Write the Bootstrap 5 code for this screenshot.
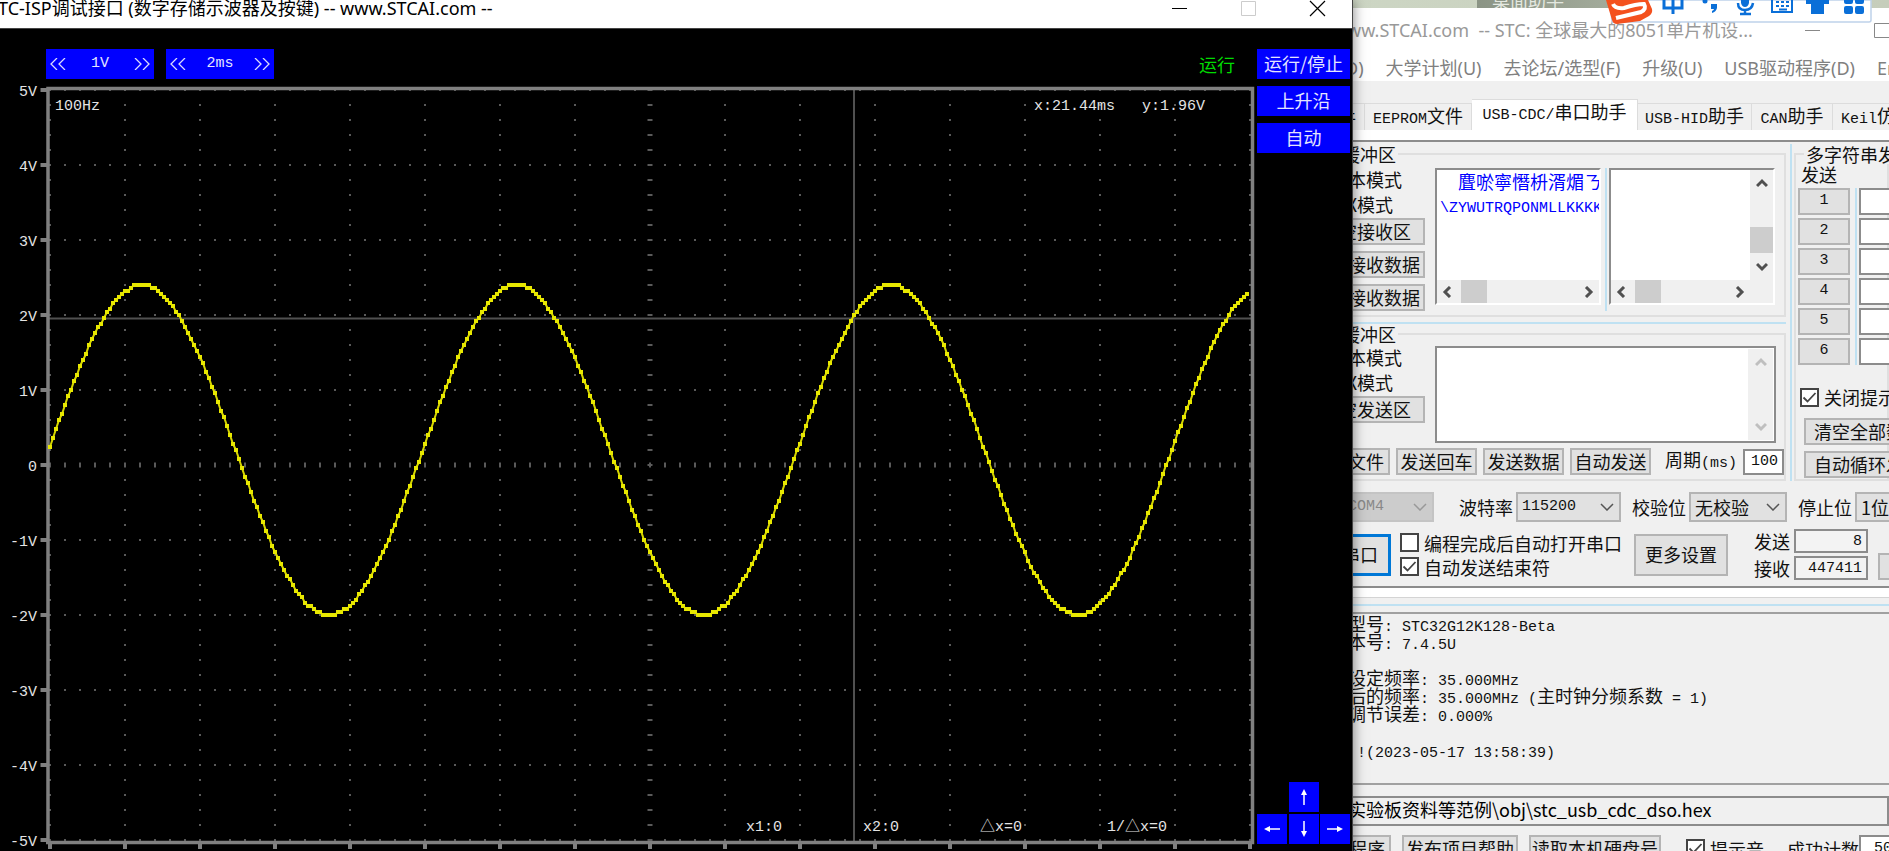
<!DOCTYPE html>
<html lang="zh-CN">
<head>
<meta charset="utf-8">
<meta name="viewport" content="width=device-width, initial-scale=1">
<title>STC-ISP 数字存储示波器</title>
<link href="https://cdn.jsdelivr.net/npm/bootstrap@5.3.0/dist/css/bootstrap.min.css" rel="stylesheet">
<style>
  body { font-family: "Noto Sans CJK SC", sans-serif; font-size: 18px; line-height: 20px; color: #111; background: #f0f0f0; }
  .en { font-family: "Liberation Mono", "Noto Sans CJK SC", monospace; font-size: 15px; }
  .ui { font-family: "Noto Sans", "Noto Sans CJK SC", sans-serif; }
  .desk { height: 100vh; }

  /* oscilloscope window */
  .scope { z-index: 2; min-width: 0; background: #000; box-shadow: 0 0 12px rgba(0,0,0,.5); border-right: 1px solid #444; }
  .scope-title { height: 29px; background: #fff; color: #000; border-bottom: 1px solid #444; line-height: 16px; }
  .scope-title .caption { text-indent: -2px; }
  .winctl { width: 69px; height: 17px; border: 0; background: none; padding: 0; display: flex; justify-content: center; }
  .scope-body { padding: 20px 2px 0 0; }
  .key { background: #00f; color: #e4e4ff; border: 0; border-radius: 0; height: 30px; padding: 0 0 2px; font-size: 18px; line-height: 28px; }
  .key svg { display: block; margin: 2px auto 0; }
  .knobs { padding-left: 46px; gap: 12px; }
  .knob { width: 108px; height: 30px; background: #00f; color: #e4e4ff; }
  .knob button { background: none; border: 0; color: inherit; padding: 0 4px; height: 30px; }
  .knob svg { display: block; }
  .side { width: 93px; padding-bottom: 7px; }
  .arrows { display: grid; grid-template-columns: repeat(3, 30px); justify-content: space-between; row-gap: 2px; }
  .arrows .up { grid-column: 2; }
  .arrows .left { grid-column: 1; }
  .state { color: #00dc00; width: 58px; line-height: 30px; }
  .plot { display: block; width: 100%; height: auto; }
  .plot text { font-family: "Liberation Mono", "Noto Sans CJK SC", monospace; font-size: 15px; fill: #e4e4e4; }

  /* programmer window, partly behind the scope */
  .isp { flex: 0 0 569px; margin-left: -33px; background: #f0f0f0; overflow: hidden; }
  .wall { height: 8px; background: linear-gradient(90deg, #cdd6c4, #c6cdbb); }
  .gadget { left: 157px; top: 0; width: 134px; height: 8px; background: linear-gradient(90deg, #8b9485, #a3ab9b); color: #e4e8e0; overflow: hidden; padding-left: 15px; line-height: 0; }
  .ime { right: 17px; top: 0; width: 266px; height: 24px; }
  .isp-title { height: 46px; background: #fff; color: #999; padding: 0 0 2px 27px; }
  .isp-menu { height: 27px; background: #fff; padding-left: 25px; gap: 22px; }
  .isp-menu a { color: #808080; text-decoration: none; white-space: nowrap; }
  .tabrow { height: 49px; flex-wrap: nowrap; overflow: hidden; }
  .tabrow button { flex: none; height: 27px; border: 1px solid #dcdcdc; border-bottom: 0; border-left: 0; background: #f0f0f0; padding: 0; color: #111; white-space: nowrap; }
  .tabrow button.on { height: 31px; background: #fff; padding-bottom: 3px; }
  .tabfoot { height: 12px; background: #fff; border-bottom: 2px solid #8c8c8c; }
  .w45 { width: 45px; } .w81 { width: 81px; } .w107 { width: 107px; } .w114 { width: 114px; } .w166 { width: 166px; }

  fieldset { border: 2px solid #dfdfdf; min-width: 0; }
  fieldset legend { float: none; width: auto; font-size: 18px; line-height: 20px; margin: 0 0 0 20px; padding: 0 2px; white-space: nowrap; }
  .left-col { width: 466px; flex: none; }
  .left-col fieldset { border-left: 0; }
  .rule-h { height: 2px; background: #bfe1f2; }
  .rule-v { width: 2px; background: #bfe1f2; flex: none; }
  .split { margin: 0 2px 0 4px; }
  .bt { background: #e1e1e1; border: 2px solid #b4b4b4; border-radius: 0; height: 27px; padding: 0 0 2px; font-size: 18px; line-height: 20px; color: #111; white-space: nowrap; flex: none; }
  .bt.en { font-size: 15px; }
  .modes { width: 105px; flex: none; }
  .modes span { height: 25px; line-height: 22px; padding-right: 23px; text-align: right; }
  .modes span + span { padding-right: 32px; }
  .modes .bt { text-align: right; padding-right: 3px; margin-bottom: 6px; }
  .modes .bt:last-child { margin-bottom: 0; }
  .modes .bt.short { padding-right: 12px; }
  .pane { width: 166px; height: 137px; background: #fff; border: 2px solid #fff; border-top-color: #8c8c8c; border-left-color: #8c8c8c; flex: none; display: grid; grid-template: 1fr 23px / 1fr 23px; }
  .pane textarea { border: 0; resize: none; outline: 0; min-width: 0; min-height: 0; }
  .pane.wide { grid-template: 1fr 23px / 1fr; }
  .rx { padding-left: 3px; overflow: hidden; color: #00f; line-height: 23px; white-space: pre; outline: 0; min-width: 0; }
  .bar { background: #f0f0f0; display: flex; align-items: center; justify-content: space-between; padding: 0 5px; }
  .bar.v { flex-direction: column; padding: 8px 0; }
  .bar i { background: #cdcdcd; }
  .bar.h i { width: 26px; height: 23px; margin-right: auto; margin-left: 9px; }
  .bar.v i { width: 23px; height: 26px; margin-top: auto; margin-bottom: 9px; }
  .bar svg { flex: none; }
  .send { width: 341px; height: 97px; border: 2px solid #8c8c8c; background: #fff; }
  .send textarea { border: 0; resize: none; outline: 0; flex: 1; min-width: 0; }
  .send .bar { width: 25px; margin: 1px; }
  .box { border: 2px solid #8c8c8c; background: #fff; border-radius: 0; padding: 0 4px; color: #111; min-width: 0; }
  .multi { display: grid; grid-template-columns: 52px 2px 60px; column-gap: 5px; row-gap: 3px; padding-left: 2px; }
  .multi .rule-v { grid-column: 2; grid-row: 1 / 7; }
  .multi .bt { grid-column: 1; } .multi .box { grid-column: 3; height: 27px; margin-left: -3px; }
  input[type=checkbox] { appearance: none; width: 19px; height: 19px; border: 2px solid #444; background: #fff; margin: 0; flex: none; }
  input[type=checkbox]:checked { background: #fff url("data:image/svg+xml,%3Csvg xmlns='http://www.w3.org/2000/svg' viewBox='0 0 15 15'%3E%3Cpath d='M1.500 7.500 5.500 11.500 13.500 3' fill='none' stroke='%23444' stroke-width='1.800'/%3E%3C/svg%3E"); }
  .tick { display: flex; align-items: center; gap: 5px; height: 20px; white-space: nowrap; }
  .combo { height: 30px; border: 2px solid #b4b4b4; border-radius: 0; padding: 0 4px; appearance: none; color: #111; flex: none; background: #e1e1e1 url("data:image/svg+xml,%3Csvg xmlns='http://www.w3.org/2000/svg' viewBox='0 0 14 8'%3E%3Cpath d='M1 1 7 7 13 1' fill='none' stroke='%23555' stroke-width='1.500'/%3E%3C/svg%3E") no-repeat right 5px center / 14px 8px; }
  .combo:disabled { background-color: #ccc; background-image: url("data:image/svg+xml,%3Csvg xmlns='http://www.w3.org/2000/svg' viewBox='0 0 14 8'%3E%3Cpath d='M1 1 7 7 13 1' fill='none' stroke='%23999' stroke-width='1.500'/%3E%3C/svg%3E"); border-color: #c4c4c4; color: #888; opacity: 1; }
  .port { height: 42px; width: 71px; border-color: #0078d7; border-width: 3px; padding-right: 10px; text-align: right; }
  .count { width: 74px; height: 24px; text-align: right; background: #f3f3f3; }
  .band { height: 12px; background: #fff; border-top: 2px solid #8c8c8c; border-bottom: 1px solid #d4d4d4; }
  .log { height: 173px; border: 2px solid #a0a0a0; border-width: 2px 0; padding: 0 0 0 28px; line-height: 18px; white-space: pre; }
  .log div { height: 18px; }
  .path { height: 30px; width: 100%; border: 2px solid #8c8c8c; background: #f0f0f0; padding: 0 0 4px 26px; }
</style>
</head>
<body>
<div class="desk d-flex overflow-hidden">

  <main class="scope flex-grow-1 position-relative d-flex flex-column">
    <header class="scope-title ui d-flex justify-content-between">
      <div class="caption text-nowrap">TC-ISP调试接口 (数字存储示波器及按键) -- www.STCAI.com --</div>
      <div class="d-flex">
        <button class="winctl" aria-label="最小化"><svg width="17" height="17"><path d="M1 8.500h15" stroke="#000"/></svg></button>
        <button class="winctl" aria-label="最大化"><svg width="17" height="17"><path d="M1.500 1.500h14v14h-14z" fill="none" stroke="#ccc"/></svg></button>
        <button class="winctl" aria-label="关闭"><svg width="17" height="17"><path d="M1 1l15 15M16 1L1 16" stroke="#000" stroke-width="1.200"/></svg></button>
      </div>
    </header>

    <div class="scope-body d-flex flex-grow-1">
      <div class="flex-grow-1">
        <div class="knobs d-flex">
          <div class="knob d-flex justify-content-between align-items-center">
            <button aria-label="减小电压"><svg width="16" height="12"><path d="M7 0 1 6l6 6M15 0 9 6l6 6" fill="none" stroke="#dcdcff" stroke-width="1.300"/></svg></button>
            <span class="en">1V</span>
            <button aria-label="增大电压"><svg width="16" height="12"><path d="M1 0l6 6-6 6M9 0l6 6-6 6" fill="none" stroke="#dcdcff" stroke-width="1.300"/></svg></button>
          </div>
          <div class="knob d-flex justify-content-between align-items-center">
            <button aria-label="减小时基"><svg width="16" height="12"><path d="M7 0 1 6l6 6M15 0 9 6l6 6" fill="none" stroke="#dcdcff" stroke-width="1.300"/></svg></button>
            <span class="en">2ms</span>
            <button aria-label="增大时基"><svg width="16" height="12"><path d="M1 0l6 6-6 6M9 0l6 6-6 6" fill="none" stroke="#dcdcff" stroke-width="1.300"/></svg></button>
          </div>
          <div class="state ms-auto">运行</div>
        </div>
        <svg class="plot" viewBox="0 79 1257 772" role="img" aria-label="100Hz 正弦波形">
          <g id="grid" fill="#5a5a5a"></g>
          <path d="M49 318.500H1251M854 90V841" stroke="#505050" stroke-width="2" fill="none"/>
          <path d="M48 842.500V88.500H1252.500V842.500H46" fill="none" stroke="#808080" stroke-width="3.500"/>
          <g id="ticks" fill="#808080"></g>
          <path id="link" fill="none" stroke="#d8d800" stroke-width="2"/>
          <g id="dots" fill="#e8e800"></g>
          <g id="volts" text-anchor="end"></g>
          <text x="55" y="110">100Hz</text>
          <text x="1034" y="110">x:21.44ms</text>
          <text x="1142" y="110">y:1.96V</text>
          <text x="746" y="831">x1:0</text>
          <text x="863" y="831">x2:0</text>
          <text x="980" y="831">△x=0</text>
          <text x="1107" y="831">1/△x=0</text>
        </svg>
      </div>
      <aside class="side flex-shrink-0 d-flex flex-column justify-content-between">
        <div class="d-grid" style="gap:7px">
          <button class="key">运行/停止</button>
          <button class="key">上升沿</button>
          <button class="key">自动</button>
        </div>
        <div class="arrows">
          <button class="key up" aria-label="上"><svg width="18" height="18"><path d="M9 17V3" stroke="#fff" stroke-width="1.500"/><path d="M9 1 6 7h6z" fill="#fff"/></svg></button>
          <button class="key left" aria-label="左"><svg width="18" height="18"><path d="M17 9H3" stroke="#fff" stroke-width="1.500"/><path d="M1 9 7 6v6z" fill="#fff"/></svg></button>
          <button class="key" aria-label="下"><svg width="18" height="18"><path d="M9 1v14" stroke="#fff" stroke-width="1.500"/><path d="M9 17 6 11h6z" fill="#fff"/></svg></button>
          <button class="key" aria-label="右"><svg width="18" height="18"><path d="M1 9h14" stroke="#fff" stroke-width="1.500"/><path d="M17 9 11 6v6z" fill="#fff"/></svg></button>
        </div>
      </aside>
    </div>
  </main>

  <section class="isp position-relative">
    <div class="wall"></div>
    <div class="gadget position-absolute">桌面助手</div>
    <svg class="ime position-absolute" viewBox="1606 0 266 24">
      <path d="M1610 0H1871V20q0 2-2 2H1612z" fill="#fff" stroke="#bfd2ea" stroke-width="1.500"/>
      <path d="M1606 0H1648l4 9q1 4-3 7l-9 5-23 3q-4 0-5-4z" fill="#f4511e"/>
      <path d="M1613 4q2 5 11 4 12-4 20-4 3 5-3 8l-25 6" fill="none" stroke="#fff" stroke-width="4"/>
      <g fill="none" stroke="#0a6fd8" stroke-width="3">
        <path d="M1664 0v8h18V0M1673 0v14"/>
        <path d="M1738 3q0 7 7 7t8-7M1745 10v5M1740 14h11" stroke-width="2.500"/>
        <path d="M1772 0v12h20V0M1776 2h3m2 0h3m2 0h3M1776 6h3m2 0h3m2 0h3M1779 9.500h8" stroke-width="2"/>
      </g>
      <g fill="#0a6fd8">
        <circle cx="1705" cy="1" r="2.500"/><path d="M1711 4h6v4q-1 4-5 5v-2q2-1 2-2h-3z"/>
        <path d="M1741 0h8v3q-1 4-4 4t-4-4z"/>
        <path d="M1806 0h23v4h-5v10h-13V4h-5z"/>
        <rect x="1844" y="-4" width="9" height="8" rx="2"/><rect x="1855" y="-4" width="9" height="8" rx="2"/>
        <rect x="1844" y="6" width="9" height="8" rx="2"/><rect x="1855" y="6" width="9" height="8" rx="2"/>
      </g>
    </svg>

    <div class="isp-title ui d-flex align-items-center text-nowrap">
      <span class="flex-grow-1">ww.STCAI.com&nbsp; -- STC: 全球最大的8051单片机设...</span>
      <svg width="85" height="17"><path d="M1 8.500h15M70.500 1.500h15v14h-15z" fill="none" stroke="#888"/></svg>
    </div>
    <nav class="isp-menu ui d-flex align-items-center">
      <a href="#">D)</a><a href="#">大学计划(U)</a><a href="#">去论坛/选型(F)</a><a href="#">升级(U)</a><a href="#">USB驱动程序(D)</a><a href="#">English</a>
    </nav>
    <div class="tabrow d-flex align-items-end">
      <button class="w45 text-end pe-2">件</button>
      <button class="w107"><span class="en">EEPROM</span>文件</button>
      <button class="w166 on"><span class="en">USB-CDC/</span>串口助手</button>
      <button class="w114"><span class="en">USB-HID</span>助手</button>
      <button class="w81"><span class="en">CAN</span>助手</button>
      <button class="w107 text-start ps-2"><span class="en">Keil</span>仿真</button>
    </div>
    <div class="tabfoot"></div>

    <div class="d-flex" style="padding-top:2px">
      <div class="left-col">
        <fieldset>
          <legend>缓冲区</legend>
          <div class="d-flex pt-1 pb-1">
            <div class="modes d-grid align-content-start">
              <span>本模式</span><span>X模式</span>
              <button class="bt short">空接收区</button>
              <button class="bt">接收数据</button>
              <button class="bt">接收数据</button>
            </div>
            <div class="pane wide" style="margin-left:10px">
              <div class="rx" role="textbox" aria-label="接收文本" contenteditable="true" spellcheck="false"><div><span class="en">  </span>麆唹寧憯枡湑煝ㄋ</div><div class="en">\ZYWUTRQPONMLLKKKK</div></div>
              <div class="bar h"><svg width="10" height="12"><path d="M8 1 3 6l5 5" fill="none" stroke="#505050" stroke-width="3"/></svg><i></i><svg width="10" height="12"><path d="M2 1l5 5-5 5" fill="none" stroke="#505050" stroke-width="3"/></svg></div>
            </div>
            <div class="rule-v split"></div>
            <div class="pane">
              <textarea aria-label="接收十六进制"></textarea>
              <div class="bar v"><svg width="12" height="10"><path d="M1 8l5-5 5 5" fill="none" stroke="#505050" stroke-width="3"/></svg><i></i><svg width="12" height="10"><path d="M1 2l5 5 5-5" fill="none" stroke="#505050" stroke-width="3"/></svg></div>
              <div class="bar h"><svg width="10" height="12"><path d="M8 1 3 6l5 5" fill="none" stroke="#505050" stroke-width="3"/></svg><i></i><svg width="10" height="12"><path d="M2 1l5 5-5 5" fill="none" stroke="#505050" stroke-width="3"/></svg></div>
              <div class="bar"></div>
            </div>
          </div>
        </fieldset>
        <div class="rule-h" style="margin-top:5px"></div>
        <fieldset>
          <legend>缓冲区</legend>
          <div class="d-flex" style="padding-top:2px">
            <div class="modes d-grid align-content-start">
              <span>本模式</span><span>X模式</span>
              <button class="bt short">空发送区</button>
            </div>
            <div class="send d-flex" style="margin-left:10px">
              <textarea aria-label="发送内容"></textarea>
              <div class="bar v"><svg width="12" height="10"><path d="M1 8l5-5 5 5" fill="none" stroke="#bfbfbf" stroke-width="3"/></svg><svg width="12" height="10"><path d="M1 2l5 5 5-5" fill="none" stroke="#bfbfbf" stroke-width="3"/></svg></div>
            </div>
          </div>
          <div class="d-flex align-items-center text-nowrap" style="gap:6px;padding:5px 0 4px">
            <button class="bt text-end pe-1" style="width:70px">文件</button>
            <button class="bt w81">发送回车</button>
            <button class="bt w81">发送数据</button>
            <button class="bt w81">自动发送</button>
            <label class="ms-2" for="period">周期<span class="en">(ms)</span></label>
            <input id="period" class="box en text-end flex-grow-1" style="width:41px;height:26px" value="100">
          </div>
        </fieldset>
      </div>
      <div class="rule-v split"></div>
      <fieldset class="flex-grow-1">
        <legend style="margin-left:8px">多字符串发送</legend>
        <div style="padding:0 0 4px 5px">发送</div>
        <div class="multi" id="multi"><div class="rule-v"></div></div>
        <label class="tick ps-1" style="margin-top:22px"><input type="checkbox" checked>关闭提示</label>
        <div class="d-grid ps-2" style="margin-top:11px;gap:6px">
          <button class="bt text-start ps-2">清空全部数据</button>
          <button class="bt text-start ps-2">自动循环发送</button>
        </div>
      </fieldset>
    </div>

    <div class="d-flex align-items-center text-nowrap" style="margin-top:11px;gap:3px">
      <select class="combo en" style="width:92px;margin-left:22px" aria-label="串口" disabled><option>COM4</option></select>
      <label style="margin-left:22px" for="baud">波特率</label>
      <select id="baud" class="combo en" style="width:105px"><option>115200</option></select>
      <label class="ms-2" for="parity">校验位</label>
      <select id="parity" class="combo" style="width:98px"><option>无校验</option></select>
      <label class="ms-2" for="stop">停止位</label>
      <select id="stop" class="combo" style="width:80px"><option>1位</option></select>
    </div>

    <div class="d-flex align-items-center text-nowrap" style="padding:7px 0 6px">
      <button class="bt port">串口</button>
      <div class="d-grid gap-1" style="margin-left:9px">
        <label class="tick"><input type="checkbox">编程完成后自动打开串口</label>
        <label class="tick"><input type="checkbox" checked>自动发送结束符</label>
      </div>
      <button class="bt" style="width:94px;height:42px;margin-left:12px">更多设置</button>
      <div class="d-grid" style="margin-left:26px;gap:3px">
        <label class="d-flex align-items-center gap-1">发送<input class="box en count" value="8" readonly></label>
        <label class="d-flex align-items-center gap-1">接收<input class="box en count" value="447411" readonly></label>
      </div>
      <button class="bt align-self-end" style="width:80px;margin-left:10px">清零</button>
    </div>

    <div class="band"></div>
    <div class="rule-h" style="margin:6px 0"></div>
    <div class="log" role="log"><div>型号<span class="en">: STC32G12K128-Beta</span></div><div>本号<span class="en">: 7.4.5U</span></div><div></div><div>设定频率<span class="en">: 35.000MHz</span></div><div>后的频率<span class="en">: 35.000MHz (</span>主时钟分频系数<span class="en"> = 1)</span></div><div>调节误差<span class="en">: 0.000%</span></div><div></div><div><span class="en"> !(2023-05-17 13:58:39)</span></div></div>
    <div style="margin:11px 0 9px"><input class="path d-block" aria-label="文件路径" readonly value="实验板资料等范例\obj\stc_usb_cdc_dso.hex"></div>
    <div class="d-flex align-items-center text-nowrap" style="gap:11px">
      <button class="bt text-end pe-1" style="width:71px">程序</button>
      <button class="bt" style="width:116px">发布项目帮助</button>
      <button class="bt" style="width:132px">读取本机硬盘号</button>
      <label class="tick" style="margin-left:14px"><input type="checkbox" checked>提示音</label>
      <label class="d-flex align-items-center" style="margin-left:12px">成功计数<input class="box en" style="width:60px;height:27px" value=" 50"></label>
    </div>
  </section>
</div>

<script>
  const X = i => 50 + i, rect = (x, y, w, h) => `<rect x="${x - w / 2}" y="${y - h / 2}" width="${w}" height="${h}"/>`;
  const put = (id, s) => document.getElementById(id).innerHTML = s;

  // graticule: a dot every 15 units along each division line
  let g = '', t = '', v = '';
  for (let r = 0; r <= 10; r++)
    for (let c = 0; c <= 80; c++) g += rect(X(c * 15), 90 + r * 75, 2, r === 5 ? 5 : 2);
  for (let c = 0; c <= 16; c++)
    for (let r = 0; r <= 50; r++) if (r % 5 || c === 8) g += rect(X(c * 75), 90 + r * 15, c === 8 ? 5 : 2, 2);
  for (let r = 0; r <= 10; r++) {
    t += rect(44, 90 + r * 75, 7, 4);
    v += `<text x="37" y="${96 + r * 75}">${r === 5 ? '0' : (5 - r) + 'V'}</text>`;
  }
  for (let c = 0; c <= 16; c++) t += rect(X(c * 75), 846, 4, 6);
  put('grid', g); put('ticks', t); put('volts', v);

  // sampled sine, one sample every 3 units
  let d = '', p = '';
  for (let x = 50; x <= 1247; x += 3) {
    const y = 450 - Math.round(165 * Math.cos(2 * Math.PI * (x - 142) / 374.5) / 3) * 3;
    d += rect(x, y, 4, 4);
    p += (p ? 'L' : 'M') + x + ' ' + y;
  }
  put('dots', d);
  document.getElementById('link').setAttribute('d', p);

  put('multi', '<div class="rule-v"></div>' + [1, 2, 3, 4, 5, 6].map(n =>
    `<button class="bt en" style="grid-row:${n}">${n}</button><input class="box" style="grid-row:${n}" aria-label="字符串 ${n}">`).join(''));
</script>
<script src="https://cdn.jsdelivr.net/npm/bootstrap@5.3.0/dist/js/bootstrap.bundle.min.js"></script>
</body>
</html>
